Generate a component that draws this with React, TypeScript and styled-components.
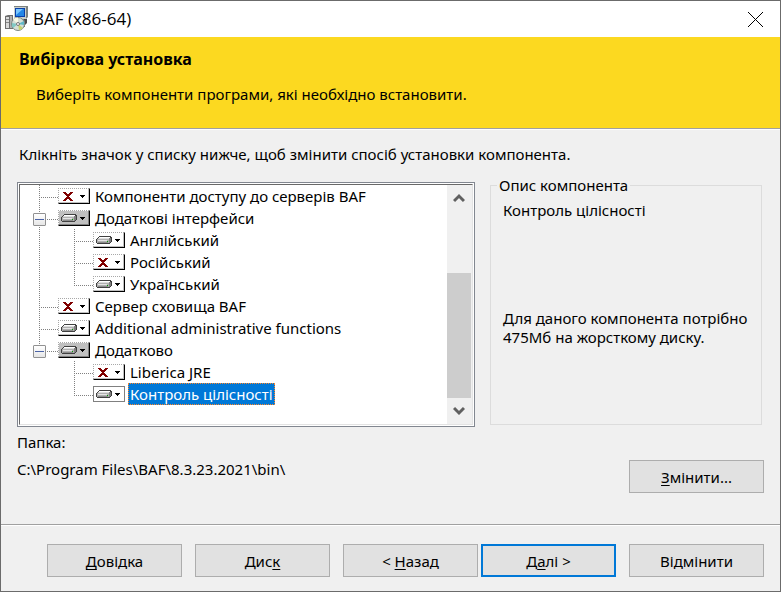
import React from "react";
import styled, { createGlobalStyle, css } from "styled-components";

const Global = createGlobalStyle`
  *, *::before, *::after { box-sizing: border-box; }
  body { margin: 0; background: #f0f0f0; }
  button { font: inherit; color: inherit; }
`;

const Dialog = styled.main`
  display: flex;
  flex-direction: column;
  min-height: 100vh;
  border: 1px solid #6b6b6b;
  background: #f0f0f0;
  color: #000;
  font: 15px/20px "Noto Sans", "Open Sans", sans-serif;
`;

const TitleBar = styled.header`
  display: flex;
  align-items: center;
  height: 36px;
  padding: 0 17px 0 3px;
  background: #fff;
`;

const Title = styled.h1`
  flex: 1;
  margin: 0 0 0 5px;
  font: 400 17px/20px "Open Sans", sans-serif;
`;

const CloseButton = styled.button`
  display: flex;
  padding: 0;
  border: 0;
  background: none;
`;

const Banner = styled.section`
  padding: 12px 18px 24px;
  border-bottom: 1px solid #a0a0a0;
  background: #fcd920;
`;

const BannerTitle = styled.h2`
  margin: 0 0 15px;
  font-size: 16px;
  line-height: 20px;
  font-weight: 700;
`;

const BannerText = styled.p`
  margin: 0 0 0 17px;
`;

const Body = styled.section`
  flex: 1;
  padding: 14px 16px 0;
  border-top: 1px solid #fff;
`;

const Hint = styled.p`
  margin: 0 2px 18px;
`;

const Columns = styled.div`
  display: grid;
  grid-template-columns: minmax(0, 1fr) 272px;
  gap: 15px;
  margin-right: 2px;
`;

const ListFrame = styled.div`
  padding: 1px;
  border: 1px solid #828790;
  background: #fff;
`;

const ListInner = styled.div`
  display: flex;
  height: 241px;
  border: 1px solid;
  border-color: #696969 #e3e3e3 #e3e3e3 #696969;
`;

const Tree = styled.ul`
  flex: 1;
  min-width: 0;
  margin: 0;
  padding: 0;
  overflow: hidden;
  list-style: none;
`;

const TreeRow = styled.li`
  display: flex;
  align-items: center;
  height: 22px;
  white-space: nowrap;
`;

const dotsDown = "repeating-linear-gradient(180deg, #808080 0 1px, transparent 1px 2px)";
const dotsAcross = "repeating-linear-gradient(90deg, #808080 0 1px, transparent 1px 2px)";
const edgeDown = "repeating-linear-gradient(180deg, #a8a8a8 0 1px, #fff 1px 2px)";
const edgeAcross = "repeating-linear-gradient(90deg, #a8a8a8 0 1px, #fff 1px 2px)";

const PassGuide = styled.span<{ $line: boolean }>`
  align-self: stretch;
  width: 35px;
  ${(p) =>
    p.$line &&
    css`
      background: ${dotsDown} 19px 0 / 1px 22px no-repeat;
    `}
`;

const ElbowGuide = styled.span<{ $last: boolean }>`
  display: flex;
  align-self: stretch;
  width: 38px;
  padding: 6px 0 0 13px;
  background:
    ${dotsDown} 19px 0 / 1px ${(p) => (p.$last ? 12 : 22)}px no-repeat,
    ${dotsAcross} 19px 12px / 19px 1px no-repeat;
`;

const Expander = styled.button`
  display: flex;
  align-items: center;
  justify-content: center;
  width: 13px;
  height: 13px;
  padding: 0;
  border: 1px solid #919191;
  border-radius: 1px;
  background: linear-gradient(#fff, #e6e6e6);
  &::before {
    content: "";
    width: 9px;
    height: 1px;
    background: #4b63a7;
  }
`;

const StateButton = styled.button<{ $shaded: boolean; $active: boolean }>`
  display: flex;
  width: 32px;
  height: 16px;
  padding: 0;
  border: 1px solid;
  border-color: transparent #000 #000 transparent;
  background-color: ${(p) => (p.$shaded ? "#c0c0c0" : "#fff")};
  background-image: ${edgeAcross}, ${edgeDown};
  background-origin: border-box;
  background-size: 32px 1px, 1px 16px;
  background-repeat: no-repeat;
  box-shadow: inset -1px -1px 0 ${(p) => (p.$shaded ? "#808080" : "#c0c0c0")};
  ${(p) =>
    p.$active &&
    css`
      background-image: none;
      border-color: #808080;
      box-shadow: none;
    `}
`;

const Label = styled.span<{ $selected: boolean }>`
  margin-left: 3px;
  padding: 0 1px;
  border: 1px solid transparent;
  line-height: 20px;
  ${(p) =>
    p.$selected &&
    css`
      border: 1px dotted #ff8728;
      background: #0078d7;
      color: #fff;
    `}
`;

const ScrollBar = styled.div`
  display: flex;
  flex-direction: column;
  width: 25px;
  padding-right: 1px;
  background: #f0f0f0;
`;

const ScrollArrow = styled.button`
  display: flex;
  align-items: center;
  justify-content: center;
  height: 26px;
  padding: 0;
  border: 0;
  background: none;
`;

const Track = styled.div`
  display: flex;
  flex: 1;
  flex-direction: column;
  justify-content: flex-end;
`;

const Thumb = styled.div`
  height: 67%;
  background: #cdcdcd;
`;

const Group = styled.fieldset`
  min-width: 0;
  margin: -7px 0 2px;
  padding: 0 10px 0 11px;
  border: 1px solid #dcdcdc;
`;

const Legend = styled.legend`
  margin-left: -5px;
  padding: 0 2px;
`;

const GroupText = styled.p`
  margin: 6px 0 0 1px;
  line-height: 19px;
  white-space: nowrap;
  & + & {
    margin-top: 89px;
  }
`;

const Folder = styled.div`
  display: flex;
  justify-content: space-between;
  padding-top: 5px;
`;

const FolderText = styled.dl`
  margin: 0;
  dd { margin: 7px 0 0; }
`;

const PushButton = styled.button<{ $primary?: boolean }>`
  flex: 0 1 135px;
  width: 135px;
  height: 33px;
  padding: 0;
  border: ${(p) => (p.$primary ? "2px solid #0078d7" : "1px solid #adadad")};
  background: #e1e1e1;
  u {
    text-underline-offset: 2px;
    text-decoration-thickness: 1px;
    text-decoration-skip-ink: none;
  }
`;

const ChangeSlot = styled.div`
  padding-top: 28px;
`;

const Footer = styled.footer`
  display: flex;
  justify-content: flex-end;
  gap: 13px;
  padding: 19px 16px 14px;
  border-top: 1px solid #a0a0a0;
  box-shadow: inset 0 1px 0 #fff;
`;

const StepPair = styled.div`
  display: flex;
  flex: 0 1 273px;
  gap: 3px;
`;

const InstallerIcon = () => (
  <svg width="24" height="26" viewBox="0 0 24 26" aria-hidden="true">
    <path d="M1 10l3-1h5v14H1z" fill="#6f6f6f" />
    <path d="M2 11h3v11H2z" fill="#dadada" />
    <path d="M6 10h2v12H6z" fill="#b0b0b0" />
    <path d="M2 13.5h3M2 16.5h3" stroke="#888" />
    <path d="M10 0h12l2-1v12l-3 3H10z" fill="#7d8280" />
    <path d="M10 1h12v12H10z" fill="#c9cfca" />
    <path d="M11 2h10v9H11z" fill="#0a3fa8" />
    <path d="M12 3h8v7h-8z" fill="#2386e6" />
    <path d="M12 3h7l-7 6z" fill="#78c6ff" />
    <path d="M20 13h3v4l-2 2h-1z" fill="#4a4a4a" />
    <path d="M9 14h12v7H9z" fill="#6a6a6a" />
    <circle cx="14" cy="18" r="6.5" fill="#d5dfd8" stroke="#7d8882" />
    <path d="M14 18L9 13.500a6 6 0 0 1 5-2z" fill="#f8f8e4" />
    <path d="M14 18l-5 4a6 6 0 0 1-1-5z" fill="#81c8c4" />
    <path d="M14 18l5 4a6 6 0 0 1-4 2z" fill="#c5d26e" />
    <path d="M14 18l6-3v4z" fill="#5fb8c8" />
    <circle cx="14" cy="18" r="1.500" fill="#fff" stroke="#777" />
  </svg>
);

const CloseIcon = () => (
  <svg width="15" height="15" viewBox="0 0 15 15" aria-hidden="true">
    <path d="M0 0l15 15M15 0l-15 15" stroke="#000" fill="none" />
  </svg>
);

const StateIcon = ({ kind }: { kind: "off" | "disk" }) => (
  <svg width="30" height="14" viewBox="0 0 30 14" shapeRendering="crispEdges" aria-hidden="true">
    {kind === "off" ? (
      <path
        d="M4 3h3v1h1v1h2V4h1V3h3v1h-1v1h-1v1h-1v1h-1v1h1v1h1v1h1v1h1v1h-3v-1h-1v-1H8v1H7v1H4v-1h1v-1h1V9h1V8h1V7H7V6H6V5H5V4H4z"
        fill="#800000"
      />
    ) : (
      <>
        <path d="M5 3h12v1h1v5h-1v1h-1v1H3v-1H2V6h1V5h1V4h1z" fill="#404040" />
        <path d="M5 4h11v1H5z" fill="#fff" />
        <path d="M4 5h11v1H4z" fill="#dcdcdc" />
        <path d="M3 6h12v4H3z" fill="#b0b0b0" />
        <path d="M4 7h9v1H4z" fill="#e4e4e4" />
        <path d="M4 9h10v1H4z" fill="#8c8c8c" />
        <path d="M15 5h2v4h-1v1h-1z" fill="#808080" />
        <path d="M13 8h1v1h-1z" fill="#00a000" />
      </>
    )}
    <path d="M21 6h5v1h-1v1h-1v1h-1V8h-1V7h-1z" fill="#000" />
  </svg>
);

const Chevron = ({ down }: { down?: boolean }) => (
  <svg width="12" height="10" viewBox="0 0 12 10" aria-hidden="true">
    <path d={down ? "M1 2l5 5 5-5" : "M1 8l5-5 5 5"} fill="none" stroke="#606060" strokeWidth="3" />
  </svg>
);

type Item = {
  name: string;
  kind: "off" | "disk";
  shaded?: boolean;
  child?: boolean;
  pass?: boolean;
  last?: boolean;
};

const items: Item[] = [
  { name: "Компоненти доступу до серверів BAF", kind: "off" },
  { name: "Додаткові інтерфейси", kind: "disk", shaded: true },
  { name: "Англійський", kind: "disk", child: true, pass: true },
  { name: "Російський", kind: "off", child: true, pass: true },
  { name: "Український", kind: "disk", child: true, pass: true, last: true },
  { name: "Сервер сховища BAF", kind: "off" },
  { name: "Additional administrative functions", kind: "disk" },
  { name: "Додатково", kind: "disk", shaded: true, last: true },
  { name: "Liberica JRE", kind: "off", child: true },
  { name: "Контроль цілісності", kind: "disk", child: true, last: true },
];

export default function App() {
  const selected = "Контроль цілісності";
  return (
    <>
      <Global />
      <Dialog>
        <TitleBar>
          <InstallerIcon />
          <Title>BAF (x86-64)</Title>
          <CloseButton type="button" aria-label="Закрити">
            <CloseIcon />
          </CloseButton>
        </TitleBar>
        <Banner>
          <BannerTitle>Вибіркова установка</BannerTitle>
          <BannerText>Виберіть компоненти програми, які необхідно встановити.</BannerText>
        </Banner>
        <Body>
          <Hint>Клікніть значок у списку нижче, щоб змінити спосіб установки компонента.</Hint>
          <Columns>
            <ListFrame>
              <ListInner>
                <Tree role="tree">
                  {items.map((item) => (
                    <TreeRow
                      key={item.name}
                      role="treeitem"
                      aria-level={item.child ? 2 : 1}
                      aria-selected={item.name === selected}
                    >
                      {item.child && <PassGuide $line={!!item.pass} />}
                      <ElbowGuide $last={!!item.last}>
                        {item.shaded && <Expander type="button" aria-label={`Згорнути ${item.name}`} />}
                      </ElbowGuide>
                      <StateButton
                        type="button"
                        aria-haspopup="menu"
                        aria-label={item.name}
                        $shaded={!!item.shaded}
                        $active={item.name === selected}
                      >
                        <StateIcon kind={item.kind} />
                      </StateButton>
                      <Label $selected={item.name === selected}>{item.name}</Label>
                    </TreeRow>
                  ))}
                </Tree>
                <ScrollBar>
                  <ScrollArrow type="button" aria-label="Вгору">
                    <Chevron />
                  </ScrollArrow>
                  <Track>
                    <Thumb />
                  </Track>
                  <ScrollArrow type="button" aria-label="Вниз">
                    <Chevron down />
                  </ScrollArrow>
                </ScrollBar>
              </ListInner>
            </ListFrame>
            <Group>
              <Legend>Опис компонента</Legend>
              <GroupText>{selected}</GroupText>
              <GroupText>
                Для даного компонента потрібно
                <br />
                475Мб на жорсткому диску.
              </GroupText>
            </Group>
          </Columns>
          <Folder>
            <FolderText>
              <dt>Папка:</dt>
              <dd>C:\Program Files\BAF\8.3.23.2021\bin\</dd>
            </FolderText>
            <ChangeSlot>
              <PushButton type="button">
                <u>З</u>мінити...
              </PushButton>
            </ChangeSlot>
          </Folder>
        </Body>
        <Footer>
          <PushButton type="button">
            <u>Д</u>овідка
          </PushButton>
          <PushButton type="button">
            Дис<u>к</u>
          </PushButton>
          <StepPair>
            <PushButton type="button">
              &lt; <u>Н</u>азад
            </PushButton>
            <PushButton type="button" $primary>
              Д<u>а</u>лі &gt;
            </PushButton>
          </StepPair>
          <PushButton type="button">Відмінити</PushButton>
        </Footer>
      </Dialog>
    </>
  );
}
